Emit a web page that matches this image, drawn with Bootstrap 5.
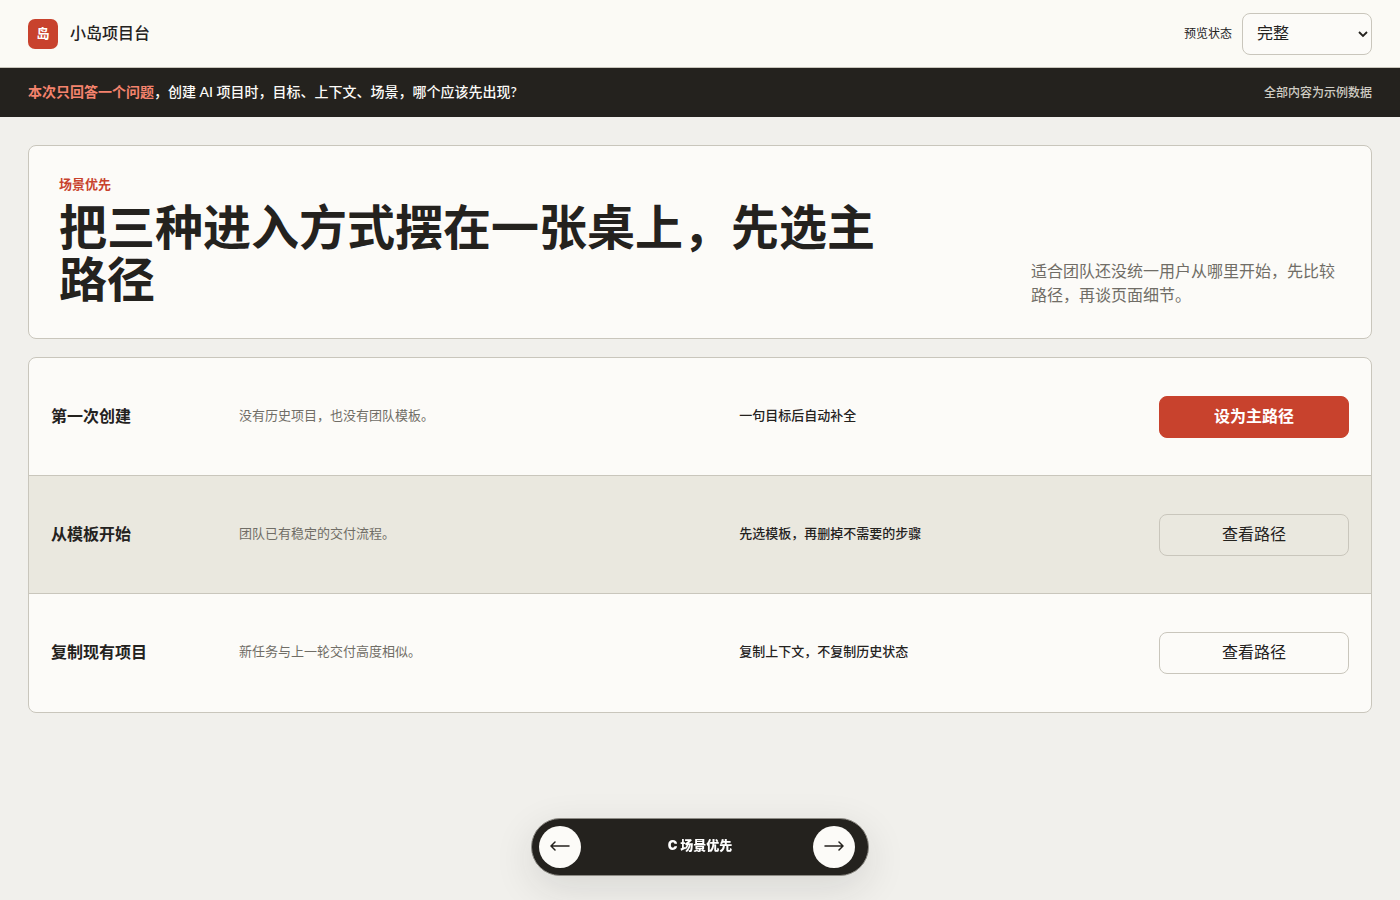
<!DOCTYPE html>
<html lang="zh-CN">
<head>
<meta charset="utf-8">
<meta name="viewport" content="width=device-width, initial-scale=1">
<title>小岛项目台</title>
<link href="https://cdn.jsdelivr.net/npm/bootstrap@5.3.0/dist/css/bootstrap.min.css" rel="stylesheet">
<style>
  :root {
    --ink: #24221e;
    --muted: #706d66;
    --line: #c9c6bc;
    --paper: #fcfbf8;
    --accent: #c8422d;
  }
  body {
    background: #f1f0ec;
    color: var(--ink);
    font-family: Lato, "Noto Sans CJK SC", sans-serif;
    font-size: 16px;
    line-height: 24px;
  }
  .topbar { min-height: 68px; padding: 12px 28px; background: #fbfaf5; border-bottom: 1px solid var(--line); }
  .logo { width: 30px; height: 30px; padding-bottom: 2px; border-radius: 7px; background: var(--accent); color: #fff; font-size: 13px; font-weight: 700; }
  .brand-name { padding-bottom: 2px; font-weight: 500; }
  .state-label { margin-right: 10px; font-size: 12px; }
  .fs-13 { font-size: 13px; line-height: 20px; }
  .state-select {
    width: 130px; height: 42px; padding: 0 32px 2px 14px;
    border-color: var(--line); border-radius: 8px; color: var(--ink);
    background-color: var(--paper);
    background-image: url("data:image/svg+xml,%3Csvg xmlns='http://www.w3.org/2000/svg' viewBox='0 0 10 10'%3E%3Cpath d='M1 3l4 4 4-4' fill='none' stroke='%2324221e' stroke-width='1.8'/%3E%3C/svg%3E");
    background-size: 10px 10px; background-position: right 3px center;
  }
  .question { min-height: 49px; padding: 11px 28px; background: var(--ink); color: #fcfbf8; font-size: 14px; font-weight: 500; }
  .question .ask { padding-bottom: 2px; }
  .question strong { color: #f4836d; font-weight: 700; }
  .question .note { color: #cfccc3; font-size: 12px; }
  main { padding: 28px 28px 120px; }
  .panel { background: var(--paper); border: 1px solid var(--line); border-radius: 8px; overflow: hidden; }
  .panel + .panel { margin-top: 18px; }
  .hero { padding: 29px 30px 31px; }
  .eyebrow { margin-bottom: 8px; color: var(--accent); font-size: 13px; line-height: 18px; font-weight: 700; }
  .hero h1 { max-width: 850px; padding-bottom: 2px; font-size: 48px; line-height: 52px; font-weight: 700; }
  .hero .intro { max-width: 310px; color: var(--muted); }
  .route { display: grid; grid-template-columns: 170px 1.2fr 1fr 190px; column-gap: 18px; align-items: center; min-height: 118px; padding: 16px 22px; }
  .route:not(:last-child) { border-bottom: 1px solid var(--line); }
  .route.is-active { background: #eae8df; }
  .route h2 { padding-bottom: 2px; font-size: 16px; line-height: 24px; font-weight: 700; }
  .route p { padding-bottom: 4px; }
  .route .when { color: var(--muted); }
  .route .how { font-weight: 500; }
  .route .btn { height: 42px; padding: 0 16px 2px; border-radius: 8px; border-color: var(--line); color: var(--ink); }
  .route .btn.is-main { background: var(--accent); border-color: var(--accent); color: #fff; font-weight: 700; }
  .pager {
    display: grid; grid-template-columns: 48px 1fr 48px; align-items: center;
    width: 338px; margin-bottom: 24px; padding: 7px; border: 1px solid #8d8b85; border-radius: 29px;
    background: var(--ink); color: #fff; box-shadow: 0 12px 40px rgba(36, 34, 30, .12);
  }
  .pager button { width: 42px; height: 42px; border: 0; border-radius: 50%; background: var(--paper); color: var(--ink); }
  .pager svg { margin-bottom: 2px; }
  .pager span { padding-bottom: 4px; font-family: Inter, "Noto Sans CJK SC", sans-serif; font-size: 13px; font-weight: 900; }
  @media (max-width: 900px) {
    .route { grid-template-columns: 1fr; row-gap: 8px; }
    .hero h1 { font-size: 32px; line-height: 40px; }
  }
</style>
</head>
<body>
<header class="topbar d-flex align-items-center justify-content-between">
  <div class="d-flex align-items-center">
    <span class="logo d-flex align-items-center justify-content-center me-2">岛</span>
    <span class="brand-name ms-1">小岛项目台</span>
  </div>
  <div class="d-flex align-items-center">
    <label for="state" class="state-label text-nowrap">预览状态</label>
    <select id="state" class="form-select state-select">
      <option selected>完整</option>
    </select>
  </div>
</header>

<div class="question d-flex flex-wrap align-items-center justify-content-between">
  <div class="ask"><strong>本次只回答一个问题</strong>，创建 AI 项目时，目标、上下文、场景，哪个应该先出现?</div>
  <div class="note">全部内容为示例数据</div>
</div>

<main>
  <section class="panel hero d-flex flex-wrap flex-lg-nowrap align-items-end justify-content-between gap-3">
    <div>
      <p class="eyebrow">场景优先</p>
      <h1 class="mb-0">把三种进入方式摆在一张桌上，先选主路径</h1>
    </div>
    <p class="intro mb-0">适合团队还没统一用户从哪里开始，先比较路径，再谈页面细节。</p>
  </section>

  <section class="panel">
    <article class="route">
      <h2 class="mb-0">第一次创建</h2>
      <p class="when fs-13 mb-0">没有历史项目，也没有团队模板。</p>
      <p class="how fs-13 mb-0">一句目标后自动补全</p>
      <button type="button" class="btn is-main">设为主路径</button>
    </article>
    <article class="route is-active">
      <h2 class="mb-0">从模板开始</h2>
      <p class="when fs-13 mb-0">团队已有稳定的交付流程。</p>
      <p class="how fs-13 mb-0">先选模板，再删掉不需要的步骤</p>
      <button type="button" class="btn">查看路径</button>
    </article>
    <article class="route">
      <h2 class="mb-0">复制现有项目</h2>
      <p class="when fs-13 mb-0">新任务与上一轮交付高度相似。</p>
      <p class="how fs-13 mb-0">复制上下文，不复制历史状态</p>
      <button type="button" class="btn">查看路径</button>
    </article>
  </section>
</main>

<div class="fixed-bottom d-flex justify-content-center pe-none">
  <nav class="pager pe-auto" aria-label="方案切换">
    <button type="button" class="d-flex align-items-center justify-content-center p-0" aria-label="上一个">
      <svg width="20" height="12" viewBox="0 0 20 12" fill="none" stroke="currentColor" stroke-width="1.5" stroke-linecap="round" stroke-linejoin="round"><path d="M19 6H1.500M5 2L1 6L5 10"/></svg>
    </button>
    <span class="text-center">C 场景优先</span>
    <button type="button" class="d-flex align-items-center justify-content-center p-0" aria-label="下一个">
      <svg width="20" height="12" viewBox="0 0 20 12" fill="none" stroke="currentColor" stroke-width="1.5" stroke-linecap="round" stroke-linejoin="round"><path d="M1 6H18.500M15 2L19 6L15 10"/></svg>
    </button>
  </nav>
</div>
<script src="https://cdn.jsdelivr.net/npm/bootstrap@5.3.0/dist/js/bootstrap.bundle.min.js"></script>
</body>
</html>
